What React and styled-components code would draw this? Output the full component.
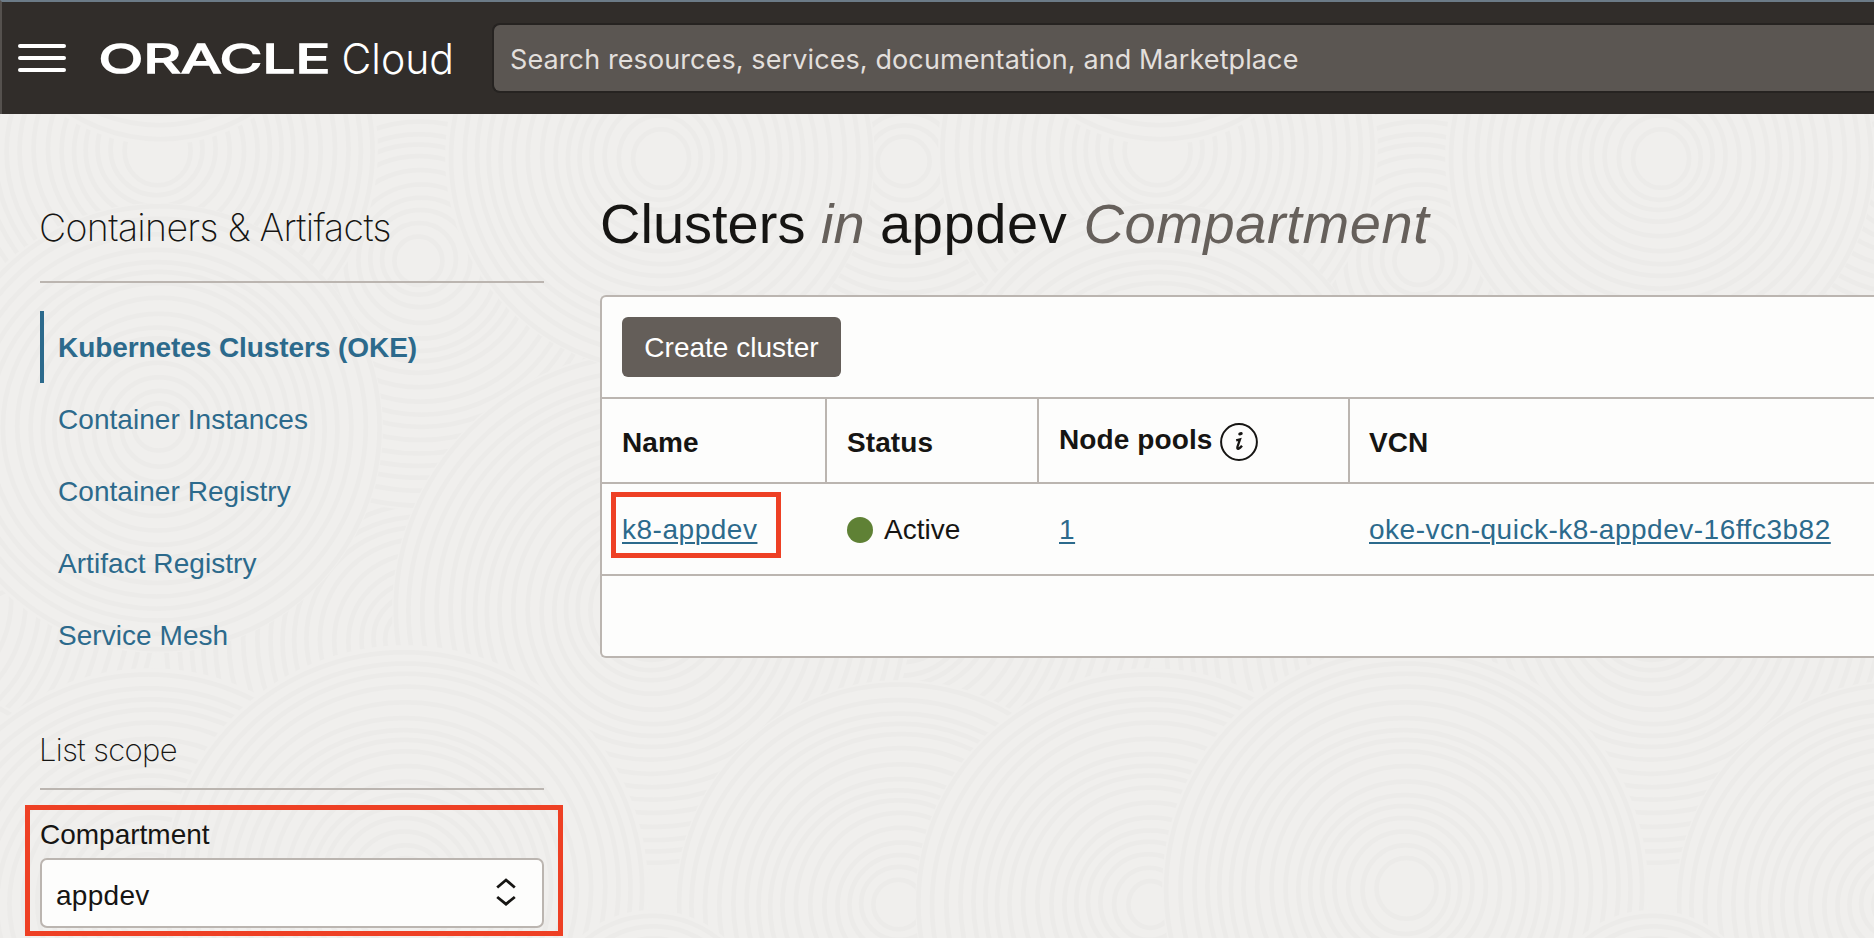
import React from "react";
import styled, { createGlobalStyle } from "styled-components";

const Global = createGlobalStyle`
  * { box-sizing: border-box; }
  html, body { margin: 0; padding: 0; height: 100%; overflow: hidden; }
  body { font-family: "Liberation Sans", Arial, sans-serif; font-size: 28px; color: #161513; background: #f0efed; }
`;

const Page = styled.div`
  position: relative;
  width: 1874px;
  height: 938px;
  overflow: hidden;
  display: flex;
  flex-direction: column;
`;
const Backdrop = styled.svg`
  position: absolute;
  inset: 0;
  z-index: -1;
`;
const Header = styled.header`
  flex: none;
  height: 114px;
  display: flex;
  align-items: center;
  background: #312d2a;
  border-top: 2px solid #6c7b87;
  border-left: 2px solid #55514e;
  padding-left: 16px;
`;
const Menu = styled.button`
  width: 48px;
  height: 28px;
  margin-top: -1px;
  padding: 0;
  border: 0;
  background: none;
  display: flex;
  flex-direction: column;
  justify-content: space-between;
`;
const Bar = styled.span`
  height: 4px;
  width: 100%;
  border-radius: 2px;
  background: #fff;
`;
const Logo = styled.svg`
  margin-left: 30px;
  flex: none;
`;
const Search = styled.div`
  margin-left: 25px;
  flex: 1;
  height: 70px;
  display: flex;
  align-items: center;
  padding: 3px 0 0 16px;
  border: 2px solid #262321;
  border-right: 0;
  border-radius: 8px 0 0 8px;
  background: #5b5652;
  color: #e2dfdc;
  font: 400 27px/63px Inter, sans-serif;
  letter-spacing: 0.1px;
  white-space: nowrap;
`;
const Body = styled.div`
  flex: 1;
  display: flex;
`;
const Sidebar = styled.aside`
  flex: none;
  width: 504px;
  margin-left: 40px;
`;
const SideTitle = styled.h2`
  margin: 0;
  height: 169px;
  padding-top: 90px;
  border-bottom: 2px solid #bbb5b0;
  font: 200 37.500px/48px Inter, sans-serif;
  letter-spacing: -0.67px;
  text-indent: -1px;
  white-space: nowrap;
`;
const Nav = styled.nav`
  margin-top: 28px;
  display: flex;
  flex-direction: column;
`;
const NavItem = styled.a`
  height: 72px;
  line-height: 74px;
  padding-left: 14px;
  border-left: 4px solid ${(p) => (p.$active ? "#2c6a8c" : "transparent")};
  color: #2c6a8c;
  font-weight: ${(p) => (p.$active ? 700 : 400)};
  letter-spacing: ${(p) => (p.$active ? -0.08 : 0.05)}px;
`;
const ScopeTitle = styled.h3`
  margin: 0;
  height: 119px;
  padding-top: 57px;
  border-bottom: 2px solid #bbb5b0;
  font: 200 31px/44px Inter, sans-serif;
  letter-spacing: -0.6px;
  text-indent: -1px;
`;
const ScopeHighlight = styled.div`
  margin: 15px -19px 0 -15px;
  height: 131px;
  padding: 7px 14px 0 10px;
  border: 5px solid #ee4024;
`;
const Label = styled.label`
  display: block;
  height: 41px;
  line-height: 36px;
`;
const Select = styled.div`
  height: 70px;
  display: flex;
  align-items: center;
  justify-content: space-between;
  padding: 6px 26px 0 14px;
  border: 2px solid #bbb5b0;
  border-radius: 7px;
  background: #fdfdfc;
  letter-spacing: 0.3px;
`;
const Chevrons = styled.svg`
  margin-top: -9px;
`;
const Main = styled.main`
  flex: 1;
  margin-left: 56px;
  min-width: 0;
`;
const Title = styled.h1`
  margin: 0;
  height: 181px;
  padding-top: 78px;
  font-size: 56px;
  line-height: 64px;
  font-weight: 400;
  white-space: nowrap;
  em { color: #66605b; }
`;
const Wide = styled.span`
  letter-spacing: 0.6px;
`;
const Panel = styled.section`
  height: 363px;
  border: 2px solid #bbb5b0;
  border-right: 0;
  border-radius: 6px 0 0 6px;
  background: #fdfdfc;
`;
const Toolbar = styled.div`
  height: 100px;
  padding: 20px;
`;
const Button = styled.button`
  display: block;
  width: 219px;
  height: 60px;
  padding: 0;
  border: 0;
  border-radius: 6px;
  background: #645e59;
  color: #fff;
  font: 400 28px/62px "Liberation Sans", Arial, sans-serif;
`;
const Row = styled.div`
  display: grid;
  grid-template-columns: 225px 212px 311px 1fr;
  height: ${(p) => p.$height}px;
  border-top: 2px solid #bbb5b0;
`;
const HeadCell = styled.div`
  display: flex;
  align-items: center;
  padding-left: ${(p) => (p.$last ? 19 : 20)}px;
  padding-top: 4px;
  border-right: ${(p) => (p.$last ? 0 : 2)}px solid #bbb5b0;
  font-weight: 700;
  letter-spacing: 0.1px;
  span { margin-top: ${(p) => (p.$raised ? -6 : 0)}px; }
`;
const InfoIcon = styled.svg`
  margin-left: 8px;
  margin-top: -2px;
`;
const Cell = styled.div`
  position: relative;
  display: flex;
  align-items: center;
  padding-left: ${(p) => (p.$last ? 19 : 20)}px;
  padding-top: 1px;
`;
const Link = styled.a`
  color: #2c6a8c;
  letter-spacing: 0.52px;
  text-decoration: underline;
  text-decoration-thickness: 2px;
  text-underline-offset: 3px;
`;
const Dot = styled.i`
  width: 26px;
  height: 26px;
  margin-right: 11px;
  border-radius: 50%;
  background: #5f8135;
`;
const NameHighlight = styled.div`
  position: absolute;
  left: 9px;
  top: 8px;
  width: 170px;
  height: 66px;
  border: 5px solid #ee4024;
`;

/* Overlapping groups of rings, later ones cover earlier ones: centre x, centre y, radius. */
const DISCS = [
  [900, 600, 260], [420, 640, 260], [420, 260, 250], [905, 380, 240], [652, 610, 260],
  [905, 163, 200], [158, 150, 220], [660, 157, 215], [158, 428, 225], [160, -30, 175],
  [900, 905, 225], [150, 903, 235], [405, 888, 243], [652, 1020, 110],
];

function Waves() {
  return (
    <Backdrop width="1874" height="938">
      <defs>
        <pattern id="waves" width="1000" height="1000" patternUnits="userSpaceOnUse">
          {DISCS.flatMap(([x, y, r], i) =>
            [-1000, 0, 1000].map((dx) => (
              <g key={i + "/" + dx} fill="none" stroke="#ecebe9" strokeWidth="4.500">
                <circle cx={x + dx} cy={y} r={r} fill="#f0efed" stroke="none" />
                {Array.from({ length: Math.floor(r / 13) - 1 }, (_, k) => (
                  <ellipse
                    key={k}
                    cx={x + dx + Math.sin(k * 0.9 + i) * 1.6}
                    cy={y + Math.cos(k * 1.3 + i) * 1.6}
                    rx={r - 5 - 13 * k}
                    ry={r - 5 - 13 * k + Math.sin(k + i) * 1.5}
                  />
                ))}
              </g>
            ))
          )}
        </pattern>
      </defs>
      <rect width="1874" height="938" fill="url(#waves)" />
    </Backdrop>
  );
}

const NAV = ["Kubernetes Clusters (OKE)", "Container Instances", "Container Registry", "Artifact Registry", "Service Mesh"];

export default function App() {
  return (
    <Page>
      <Global />
      <Waves />
      <Header>
        <Menu aria-label="Menu"><Bar /><Bar /><Bar /></Menu>
        <Logo width="371" height="64" viewBox="0 0 371 64">
          <text x="2.500" y="47" textLength="232" lengthAdjust="spacingAndGlyphs" fill="#fff" stroke="#fff" strokeWidth="1.600" fontFamily="Inter, sans-serif" fontWeight="400" fontSize="40">ORACLE</text>
          <text x="245.500" y="47.500" textLength="112.500" lengthAdjust="spacingAndGlyphs" fill="#fff" fontFamily="Inter, sans-serif" fontWeight="300" fontSize="42">Cloud</text>
        </Logo>
        <Search>Search resources, services, documentation, and Marketplace</Search>
      </Header>
      <Body>
        <Sidebar>
          <SideTitle>Containers &amp; Artifacts</SideTitle>
          <Nav>{NAV.map((n, i) => <NavItem key={n} $active={i === 0}>{n}</NavItem>)}</Nav>
          <ScopeTitle>List scope</ScopeTitle>
          <ScopeHighlight>
            <Label>Compartment</Label>
            <Select>
              appdev
              <Chevrons width="20" height="28" viewBox="0 0 20 28" fill="none" stroke="#161513" strokeWidth="2.800">
                <path d="M1.200 9.500 10 2l8.800 7.500M1.200 19l8.800 7.200 8.800-7.200" />
              </Chevrons>
            </Select>
          </ScopeHighlight>
        </Sidebar>
        <Main>
          <Title>Clusters <em>in</em> <Wide>appdev <em>Compartment</em></Wide></Title>
          <Panel>
            <Toolbar><Button>Create cluster</Button></Toolbar>
            <Row $height={85}>
              <HeadCell>Name</HeadCell>
              <HeadCell>Status</HeadCell>
              <HeadCell $raised>
                <span>Node pools</span>
                <InfoIcon width="38" height="38" viewBox="0 0 38 38">
                  <circle cx="19" cy="19" r="17.900" fill="none" stroke="#161513" strokeWidth="2" />
                  <ellipse cx="20.500" cy="10.800" rx="2.300" ry="1.600" transform="rotate(-15 20.500 10.800)" fill="#161513" />
                  <path d="M16.200 17.300l3.800-1-2.600 7.700q-.5 2.300 1.300 1.600 1.600-.7 3.300-2.800" fill="none" stroke="#161513" strokeWidth="2.300" />
                </InfoIcon>
              </HeadCell>
              <HeadCell $last>VCN</HeadCell>
            </Row>
            <Row $height={92}>
              <Cell><Link>k8-appdev</Link><NameHighlight /></Cell>
              <Cell><Dot />Active</Cell>
              <Cell><Link>1</Link></Cell>
              <Cell $last><Link>oke-vcn-quick-k8-appdev-16ffc3b82</Link></Cell>
            </Row>
            <Row $height={80} />
          </Panel>
        </Main>
      </Body>
    </Page>
  );
}
